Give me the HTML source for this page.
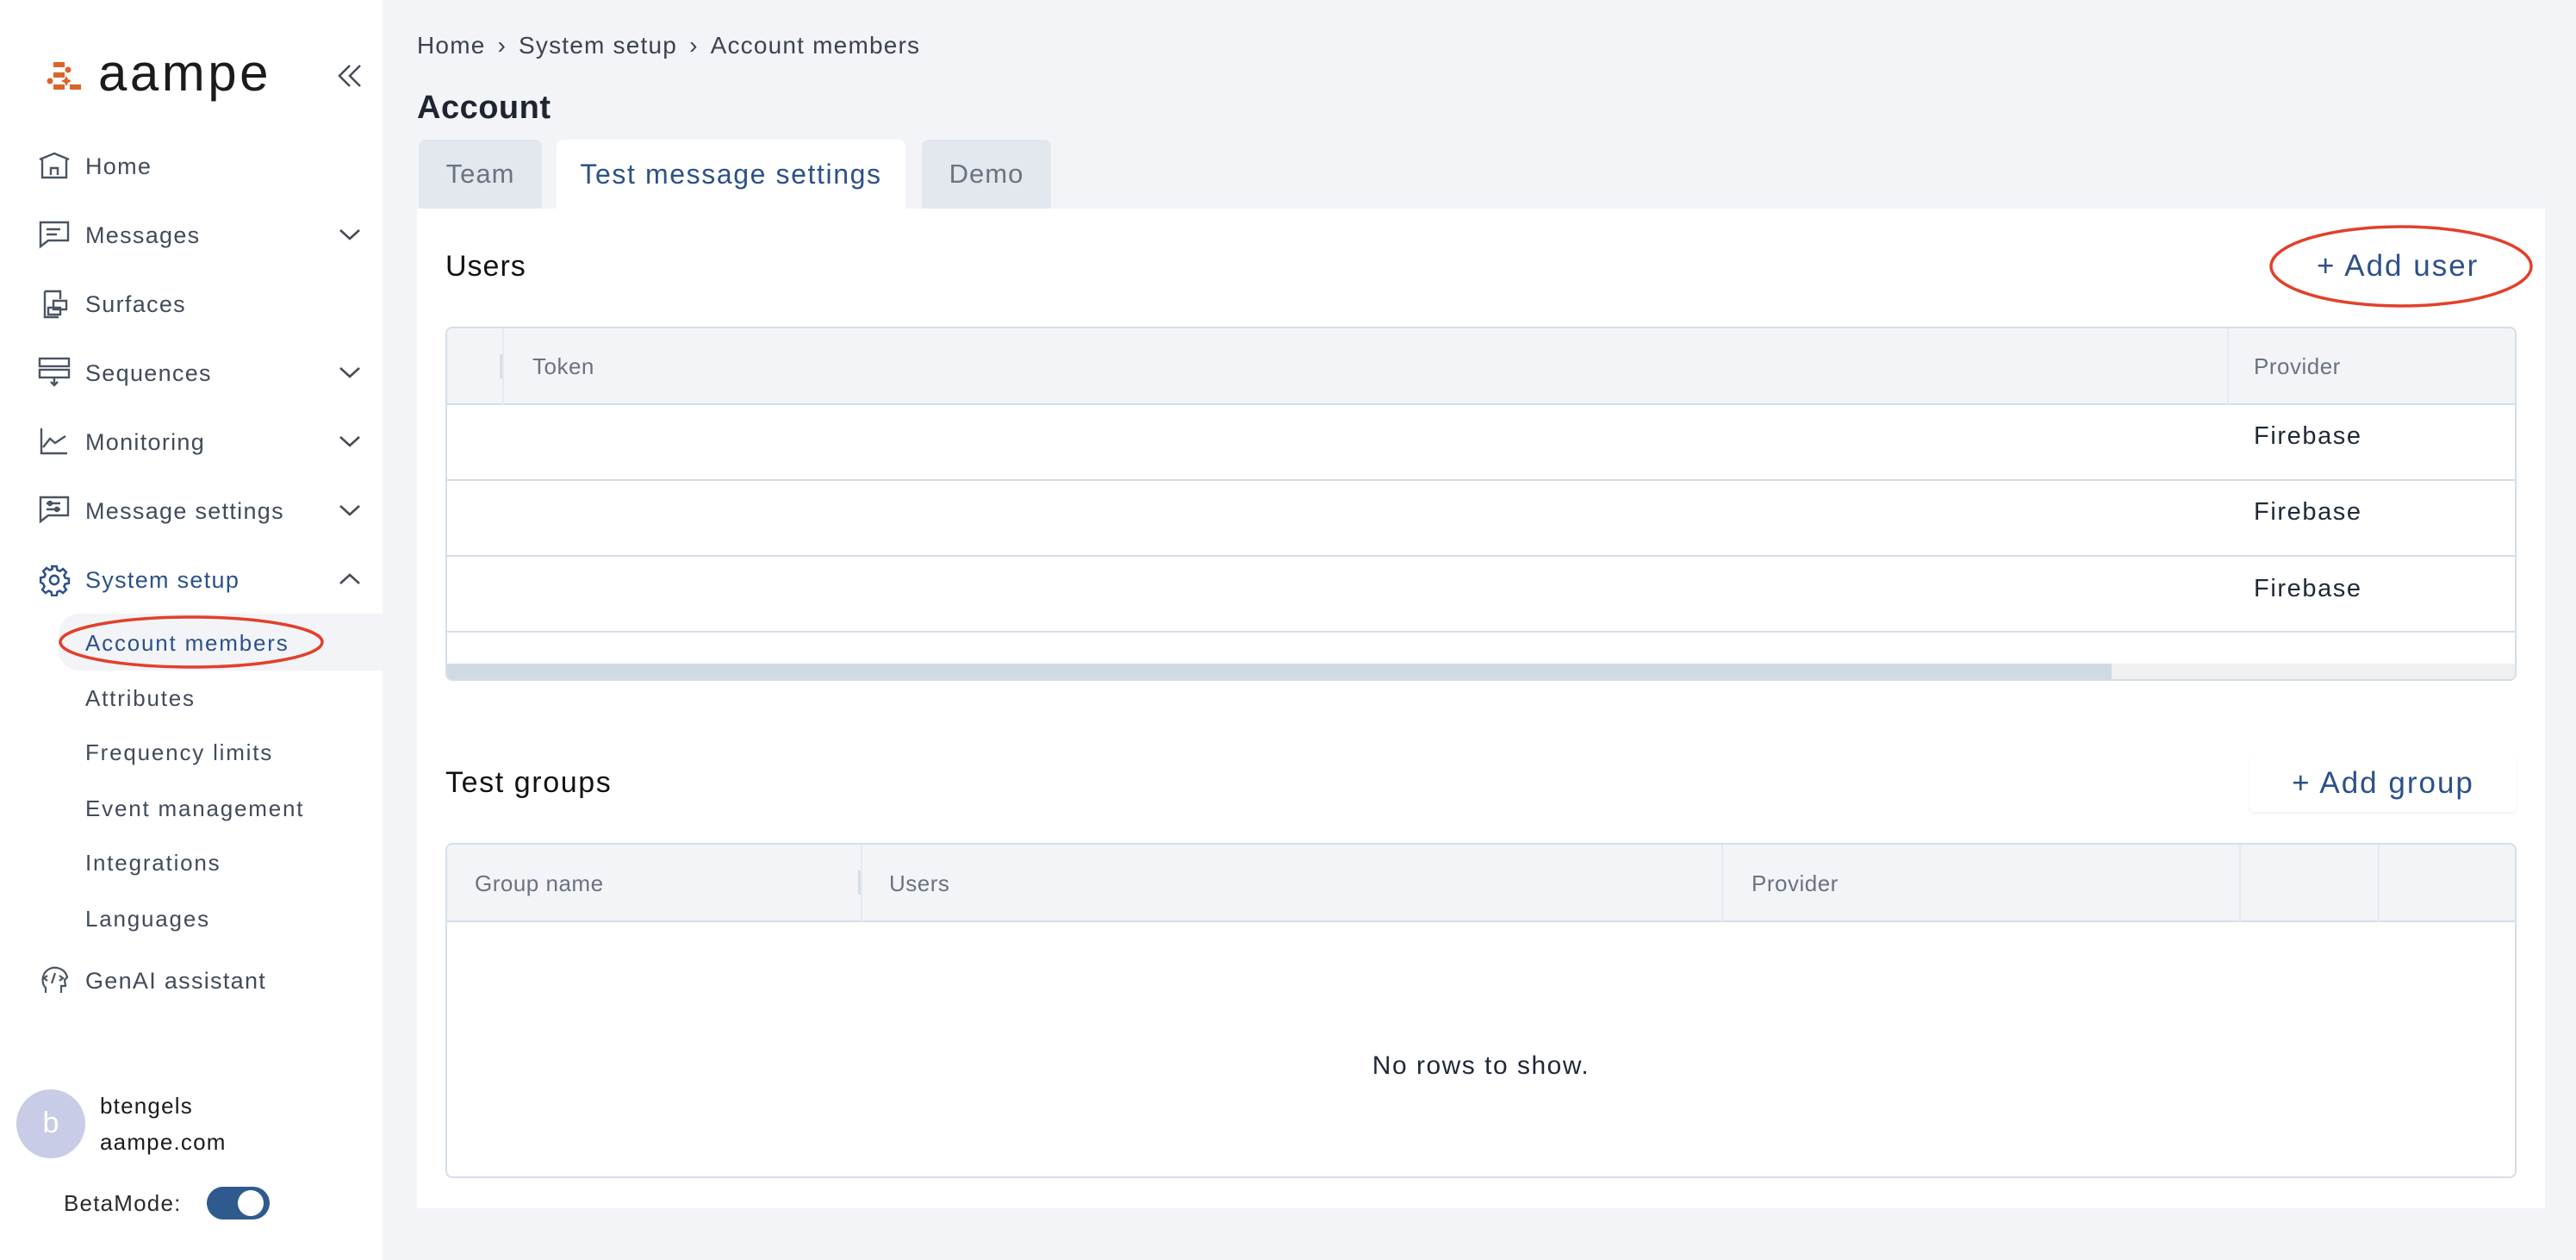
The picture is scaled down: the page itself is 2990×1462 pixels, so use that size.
<!DOCTYPE html>
<html><head><meta charset="utf-8"><style>
*{margin:0;padding:0;box-sizing:border-box}
body{width:2990px;height:1462px;background:#f3f4f8;font-family:"Liberation Sans",sans-serif;position:relative;overflow:hidden;color:#1f2937}
.a{position:absolute;white-space:nowrap}
#side{position:absolute;left:0;top:0;width:444px;height:1462px;background:#fff}
.nav{position:absolute;left:99px;font-size:27px;color:#414b5a;letter-spacing:1.3px;line-height:30px}
.sub{position:absolute;left:99px;font-size:26px;color:#414b5a;letter-spacing:1.8px;line-height:30px}
.ic{position:absolute;left:44px}
.chev{position:absolute;left:392px}
.th{position:absolute;font-size:26px;color:#6b7380;line-height:30px;letter-spacing:0.5px}
.fb{position:absolute;left:2616px;font-size:29px;color:#1f2937;line-height:32px;letter-spacing:1.6px}
</style></head><body>
<div id="side">
<svg class="a" style="left:52px;top:66px" width="48" height="44" viewBox="52 66 48 44">
<g fill="#d9652a"><rect x="62" y="72" width="13" height="6"/><circle cx="79" cy="81" r="3.5"/><rect x="62" y="84" width="13" height="6"/><circle cx="58" cy="94" r="3.5"/><rect x="62" y="98" width="13" height="6"/><path d="M77 88 L79 92 L83 94 L79 96 L77 100 L75 96 L71 94 L75 92Z"/><rect x="81" y="98" width="13" height="6"/></g></svg>
<div class="a" style="left:114px;top:52px;font-size:60px;color:#1b1b1b;letter-spacing:3.5px;line-height:66px">aampe</div>
<svg class="a" style="left:388px;top:72px" width="36" height="32" viewBox="0 0 36 32" fill="none" stroke="#444c58" stroke-width="2.5"><path d="M18 4 L6 16 L18 28 M30 4 L18 16 L30 28"/></svg>

<svg class="ic" style="top:175px" width="38" height="34" viewBox="0 0 38 34" fill="none" stroke="#4a5463" stroke-width="2.4"><path d="M2 10 L19 3 L36 10 M5 10 V31 H33 V10 M15 28 V20 H23 V28"/></svg>
<div class="nav" style="top:178px">Home</div>
<svg class="ic" style="top:255px" width="38" height="34" viewBox="0 0 38 34" fill="none" stroke="#4a5463" stroke-width="2.4"><path d="M3 3 H35 V24 H12 L3 31Z M10 11 H26 M10 17 H22"/></svg>
<div class="nav" style="top:258px">Messages</div>
<svg class="ic" style="top:335px" width="38" height="36" viewBox="0 0 38 36" fill="none" stroke="#4a5463" stroke-width="2.4"><path d="M8 3 H26 V12 M8 3 V33 H24 M18 14 H33 V24 H18 Z M12 22 H26 V30 H12Z"/></svg>
<div class="nav" style="top:338px">Surfaces</div>
<svg class="ic" style="top:413px" width="38" height="40" viewBox="0 0 38 40" fill="none" stroke="#4a5463" stroke-width="2.4"><rect x="2" y="3" width="34" height="9"/><rect x="2" y="16" width="34" height="9"/><path d="M19 25 V33 M15 30 L19 34 L23 30"/></svg>
<div class="nav" style="top:418px">Sequences</div>
<svg class="ic" style="top:494px" width="38" height="36" viewBox="0 0 38 36" fill="none" stroke="#4a5463" stroke-width="2.4"><path d="M4 3 V32 H34 M6 25 L14 15 L20 20 L32 12"/></svg>
<div class="nav" style="top:498px">Monitoring</div>
<svg class="ic" style="top:574px" width="38" height="34" viewBox="0 0 38 34" fill="none" stroke="#4a5463" stroke-width="2.4"><path d="M3 3 H35 V24 H12 L3 31Z M10 10 H26 M10 17 H26"/><circle cx="14" cy="10" r="2"/><circle cx="22" cy="17" r="2"/></svg>
<div class="nav" style="top:578px">Message settings</div>
<svg class="ic" style="top:654px" width="38" height="38" viewBox="0 0 24 24" fill="none" stroke="#2c5189" stroke-width="1.6"><circle cx="12" cy="12" r="3.2"/><path d="M10.3 2h3.4l.5 2.7 1.9.8 2.3-1.6 2.4 2.4-1.6 2.3.8 1.9 2.7.5v3.4l-2.7.5-.8 1.9 1.6 2.3-2.4 2.4-2.3-1.6-1.9.8-.5 2.7h-3.4l-.5-2.7-1.9-.8-2.3 1.6-2.4-2.4 1.6-2.3-.8-1.9L2 13.7v-3.4l2.7-.5.8-1.9-1.6-2.3 2.4-2.4 2.3 1.6 1.9-.8z"/></svg>
<div class="nav" style="top:658px;color:#2c5189">System setup</div>
<svg class="chev" style="top:262px" width="28" height="20" viewBox="0 0 28 20" fill="none" stroke="#444c58" stroke-width="2.6"><path d="M3 5 L14 15 L25 5"/></svg>
<svg class="chev" style="top:422px" width="28" height="20" viewBox="0 0 28 20" fill="none" stroke="#444c58" stroke-width="2.6"><path d="M3 5 L14 15 L25 5"/></svg>
<svg class="chev" style="top:502px" width="28" height="20" viewBox="0 0 28 20" fill="none" stroke="#444c58" stroke-width="2.6"><path d="M3 5 L14 15 L25 5"/></svg>
<svg class="chev" style="top:582px" width="28" height="20" viewBox="0 0 28 20" fill="none" stroke="#444c58" stroke-width="2.6"><path d="M3 5 L14 15 L25 5"/></svg>
<svg class="chev" style="top:662px" width="28" height="20" viewBox="0 0 28 20" fill="none" stroke="#444c58" stroke-width="2.6"><path d="M3 15 L14 5 L25 15"/></svg>
<div class="a" style="left:68px;top:712px;width:376px;height:66px;background:#f3f4f8;border-radius:24px 0 0 24px"></div>
<div class="sub" style="top:731px;color:#2c5189">Account members</div>
<svg class="a" style="left:66px;top:712px" width="312" height="66"><ellipse cx="156" cy="33" rx="152" ry="29" fill="none" stroke="#e2402a" stroke-width="3.5"/></svg>
<div class="sub" style="top:795px">Attributes</div>
<div class="sub" style="top:858px">Frequency limits</div>
<div class="sub" style="top:923px">Event management</div>
<div class="sub" style="top:986px">Integrations</div>
<div class="sub" style="top:1051px">Languages</div>
<svg class="ic" style="top:1120px;left:46px" width="34" height="34" viewBox="0 0 34 34" fill="none" stroke="#4a5463" stroke-width="2.2"><path d="M7 32 V26 C2 22 2 10 10 5 C18 0 30 4 32 14 L29 17 L30 24 H25 V32 M9 12 L5 15 L9 18 M23 12 L27 15 L23 18 M18 9 L14 21"/></svg>
<div class="nav" style="top:1123px">GenAI assistant</div>
<div class="a" style="left:19px;top:1264px;width:80px;height:80px;border-radius:50%;background:#c8cce6;color:#fff;font-size:34px;text-align:center;line-height:78px">b</div>
<div class="a" style="left:116px;top:1268px;font-size:26px;color:#1b1b1b;letter-spacing:1.2px">btengels</div>
<div class="a" style="left:116px;top:1310px;font-size:26px;color:#1b1b1b;letter-spacing:1.2px">aampe.com</div>
<div class="a" style="left:74px;top:1381px;font-size:26px;color:#2b2b2b;letter-spacing:1.2px">BetaMode:</div>
<div class="a" style="left:240px;top:1377px;width:73px;height:38px;border-radius:19px;background:#2f5a8e"></div>
<div class="a" style="left:276px;top:1381px;width:30px;height:30px;border-radius:50%;background:#fff"></div>
</div>

<div class="a" style="left:484px;top:38px;font-size:28px;color:#3b4350;line-height:30px;letter-spacing:1.2px">Home<span style="margin:0 14px">›</span>System setup<span style="margin:0 14px">›</span>Account members</div>
<div class="a" style="left:484px;top:104px;font-size:38px;font-weight:bold;color:#1f2530;letter-spacing:0.5px">Account</div>
<div class="a" style="left:486px;top:162px;width:143px;height:80px;background:#e3e8ef;border-radius:8px 8px 0 0;font-size:31px;color:#6b7380;text-align:center;line-height:80px;letter-spacing:1px">Team</div>
<div class="a" style="left:646px;top:162px;width:405px;height:80px;background:#fff;border-radius:8px 8px 0 0;font-size:32px;color:#2c5189;text-align:center;line-height:80px;letter-spacing:1.6px">Test message settings</div>
<div class="a" style="left:1070px;top:162px;width:150px;height:80px;background:#e3e8ef;border-radius:8px 8px 0 0;font-size:31px;color:#6b7380;text-align:center;line-height:80px;letter-spacing:1px">Demo</div>
<div class="a" style="left:484px;top:242px;width:2470px;height:1160px;background:#fff"></div>

<div class="a" style="left:517px;top:290px;font-size:34px;color:#111;letter-spacing:1px">Users</div>
<div class="a" style="left:2689px;top:289px;font-size:35px;color:#2c5189;letter-spacing:2px">+ Add user</div>
<svg class="a" style="left:2630px;top:256px" width="314" height="106"><ellipse cx="157" cy="53" rx="151" ry="46" fill="none" stroke="#e2402a" stroke-width="3.5"/></svg>

<div class="a" style="left:517px;top:379px;width:2404px;height:411px;border:2px solid #d5dee8;border-radius:8px;overflow:hidden;background:#fff">
<div class="a" style="left:0;top:0;width:2404px;height:89px;background:#f3f4f8;border-bottom:2px solid #d5dee8"></div>
<div class="a" style="left:64px;top:0;width:2px;height:89px;background:#e6eaef"></div>
<div class="a" style="left:61px;top:30px;width:3px;height:28px;background:#d5dee8"></div>
<div class="a" style="left:2066px;top:0;width:2px;height:89px;background:#e6eaef"></div>
<div class="th" style="left:99px;top:29px">Token</div>
<div class="th" style="left:2097px;top:29px">Provider</div>
<div class="a" style="left:0;top:175px;width:2404px;height:2px;background:#d5dee8"></div>
<div class="a" style="left:0;top:263px;width:2404px;height:2px;background:#d5dee8"></div>
<div class="a" style="left:0;top:351px;width:2404px;height:2px;background:#d5dee8"></div>
<div class="a" style="left:0;top:389px;width:2404px;height:20px;background:#eff0f1"></div>
<div class="a" style="left:0;top:389px;width:1932px;height:20px;background:#d0dae5"></div>
</div>
<div class="fb" style="top:490px">Firebase</div>
<div class="fb" style="top:578px">Firebase</div>
<div class="fb" style="top:667px">Firebase</div>

<div class="a" style="left:517px;top:889px;font-size:34px;color:#111;letter-spacing:1.6px">Test groups</div>
<div class="a" style="left:2611px;top:875px;width:310px;height:67px;background:#fff;border-radius:6px;box-shadow:0 2px 4px rgba(0,0,0,0.06);font-size:35px;color:#2c5189;text-align:center;line-height:67px;letter-spacing:2px">+ Add group</div>

<div class="a" style="left:517px;top:978px;width:2404px;height:389px;border:2px solid #d5dee8;border-radius:8px;overflow:hidden;background:#fff">
<div class="a" style="left:0;top:0;width:2404px;height:90px;background:#f3f4f8;border-bottom:2px solid #d5dee8"></div>
<div class="a" style="left:480px;top:0;width:2px;height:90px;background:#e6eaef"></div>
<div class="a" style="left:477px;top:30px;width:3px;height:28px;background:#d5dee8"></div>
<div class="a" style="left:1479px;top:0;width:2px;height:90px;background:#e6eaef"></div>
<div class="a" style="left:2080px;top:0;width:2px;height:90px;background:#e6eaef"></div>
<div class="a" style="left:2241px;top:0;width:2px;height:90px;background:#e6eaef"></div>
<div class="th" style="left:32px;top:30px">Group name</div>
<div class="th" style="left:513px;top:30px">Users</div>
<div class="th" style="left:1514px;top:30px">Provider</div>
<div class="a" style="left:0;top:240px;width:2400px;text-align:center;font-size:30px;color:#1f2937;letter-spacing:1.5px">No rows to show.</div>
</div>
</body></html>
